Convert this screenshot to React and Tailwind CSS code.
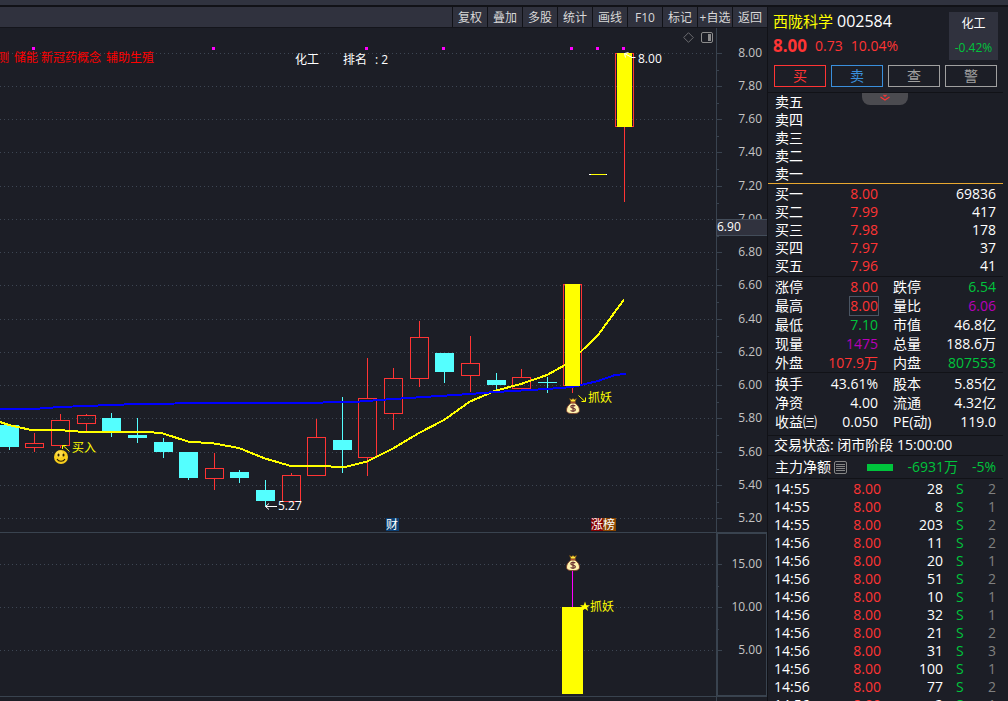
import React from "react";

const TOOLS = ["复权", "叠加", "多股", "统计", "画线", "F10", "标记", "+自选", "返回"];

const GRID = [
  ["8.00", 53], ["7.80", 86], ["7.60", 119], ["7.40", 152], ["7.20", 186], ["7.00", 219],
  ["6.80", 252], ["6.60", 285], ["6.40", 319], ["6.20", 352], ["6.00", 385], ["5.80", 418],
  ["5.60", 452], ["5.40", 485], ["5.20", 518],
];
const LOWER_GRID = [["15.00", 564], ["10.00", 607], ["5.00", 650]];

// [left edge, body top, body bottom, wick top, wick bottom, rising]
const CANDLES = [
  [0, 425, 447, 425, 450, false],
  [25, 443, 448, 433, 452, true],
  [51, 420, 446, 414, 448, true],
  [77, 415, 424, 414, 431, true],
  [102, 418, 432, 413, 437, false],
  [128, 435, 438, 418, 443, false],
  [154, 442, 452, 438, 458, false],
  [179, 452, 478, 452, 480, false],
  [205, 468, 479, 453, 490, true],
  [230, 472, 478, 470, 483, false],
  [256, 490, 501, 480, 506, false],
  [282, 475, 502, 473, 502, true],
  [307, 437, 476, 419, 476, true],
  [333, 440, 450, 397, 473, false],
  [358, 398, 458, 358, 476, true],
  [384, 378, 414, 368, 430, true],
  [410, 337, 379, 321, 387, true],
  [435, 353, 372, 353, 383, false],
  [461, 363, 376, 336, 392, true],
  [487, 380, 385, 373, 389, false],
  [512, 377, 389, 369, 389, true],
  [538, 382, 383, 377, 393, false],
  [563, 284, 386, 284, 393, true],
  [615, 53, 127, 53, 202, true],
];

const SELL = ["卖五", "卖四", "卖三", "卖二", "卖一"];
const BUY = [
  ["买一", "8.00", "69836"], ["买二", "7.99", "417"], ["买三", "7.98", "178"],
  ["买四", "7.97", "37"], ["买五", "7.96", "41"],
];

const R = "text-[#ff3434]";
const G = "text-[#00c43c]";
const P = "text-[#b800b8]";
const W = "text-white";
const STATS = [
  ["涨停", "8.00", R, "跌停", "6.54", G],
  ["最高", "8.00", R, "量比", "6.06", P],
  ["最低", "7.10", G, "市值", "46.8亿", W],
  ["现量", "1475", P, "总量", "188.6万", W],
  ["外盘", "107.9万", R, "内盘", "807553", G],
];
const STATS2 = [
  ["换手", "43.61%", W, "股本", "5.85亿", W],
  ["净资", "4.00", W, "流通", "4.32亿", W],
  ["收益㈢", "0.050", W, "PE(动)", "119.0", W],
];
const TRADES = [
  ["14:55", 28, 2], ["14:55", 8, 1], ["14:55", 203, 2], ["14:56", 11, 2], ["14:56", 20, 1],
  ["14:56", 51, 2], ["14:56", 10, 1], ["14:56", 32, 1], ["14:56", 21, 2], ["14:56", 31, 3],
  ["14:56", 100, 1], ["14:56", 77, 2], ["14:56", 2, 1],
];

function Candle({ c }) {
  const [x, top, bottom, high, low, up] = c;
  const mid = x + 9;
  const color = up ? "#ff3434" : "#54ffff";
  return (
    <g fill={color}>
      {high < top && <rect x={mid} y={high} width="1" height={top - high} />}
      {low > bottom && <rect x={mid} y={bottom} width="1" height={low - bottom} />}
      {up ? (
        <rect x={x + 0.5} y={top + 0.5} width="18" height={bottom - top - 1} fill="none" stroke={color} />
      ) : (
        <rect x={x} y={top} width="19" height={bottom - top} />
      )}
    </g>
  );
}

function MoneyBag({ x, y }) {
  return (
    <g transform={`translate(${x} ${y})`} shapeRendering="auto">
      <path d="M3.5 0.5 L5.5 1.5 L7 0.6 L8.5 1.5 L10.5 0.5 L9 4 H5 Z" fill="#ffe43a" stroke="#6a4010" strokeWidth="0.7" />
      <path d="M5 5 H9 C11.5 7 13.5 9 13.5 12 C13.5 14.8 11.5 15.6 7 15.6 C2.5 15.6 0.5 14.8 0.5 12 C0.5 9 2.5 7 5 5 Z" fill="#fff3ae" stroke="#7a3c28" strokeWidth="0.9" />
      <rect x="4.5" y="3.8" width="5" height="1.4" fill="#a8502c" />
      <path d="M9.2 8.2 C8.5 7.2 4.8 7 4.8 8.8 C4.8 10.6 9.4 9.8 9.4 11.8 C9.4 13.6 5.4 13.4 4.6 12.3 M7 6.6 V14" fill="none" stroke="#6e3434" strokeWidth="1.2" />
    </g>
  );
}

function Chart() {
  return (
    <svg
      className="block h-full w-full"
      viewBox="0 28 767 673"
      preserveAspectRatio="xMaxYMin slice"
      shapeRendering="crispEdges"
      fontSize="12"
      role="img"
      aria-label="西陇科学 K线图"
    >
      <g stroke="#3d4653" strokeDasharray="1 3">
        {[...GRID, ...LOWER_GRID].map(([label, y]) => (
          <line key={label} x1="0" x2="716" y1={y + 0.5} y2={y + 0.5} />
        ))}
      </g>

      <g fill="#39434f">
        <rect x="716" y="28" width="1" height="673" />
        <rect x="0" y="532" width="767" height="1" />
        <rect x="0" y="696" width="767" height="1" />
        {GRID.map(([label, y]) => (
          <React.Fragment key={label}>
            <rect x="717" y={y} width="5" height="1" />
            {y < 518 && <rect x="717" y={y + 17} width="2" height="1" />}
          </React.Fragment>
        ))}
        {LOWER_GRID.map(([label, y]) => (
          <React.Fragment key={label}>
            <rect x="717" y={y} width="5" height="1" />
            {y < 650 && <rect x="717" y={y + 22} width="2" height="1" />}
          </React.Fragment>
        ))}
      </g>
      <rect x="717.5" y="533.5" width="49" height="162" fill="none" stroke="#39434f" />

      <g fill="#c4c4c4" textAnchor="end">
        {[...GRID, ...LOWER_GRID].map(([label, y]) => (
          <text key={label} x="762" y={y + 4}>{label}</text>
        ))}
      </g>
      <rect x="716.5" y="219.5" width="51" height="16" fill="#30323e" stroke="#434d5a" />
      <text x="717" y="231" fill="#fff">6.90</text>

      {CANDLES.map((c) => <Candle key={c[0]} c={c} />)}
      <rect x="589" y="174" width="2" height="1" fill="#fff" />
      <rect x="591" y="174" width="15" height="1" fill="#ff0" />
      <rect x="606" y="174" width="1" height="1" fill="#fff" />

      <polyline
        fill="none" stroke="#ff0" strokeWidth="2"
        points="0,422 9,425 31,430 60,430 70,431 86,432 150,432 163,433.5 188,441.5 214,443.5 239,448 265,458.5 291,466 316,466 345,467 367,461.5 393,448.5 419,433 444,420 470,401.5 496,390.5 521,384 547,375 565,365 580,352.5 598,335 624,299.5"
      />
      <polyline
        fill="none" stroke="#00f" strokeWidth="2"
        points="0,409 34,409 60,407 111,405 137,404 214,403 316,403 330,402 353,402 393,399 470,394 496,392 547,389 572,387 598,381 615,375 626,374"
      />
      <g fill="#ff0">
        <rect x="565" y="284" width="15" height="102" />
        <rect x="617" y="53" width="15" height="74" />
        <rect x="562" y="607" width="21" height="87" />
      </g>
      <rect x="572" y="570" width="1" height="37" fill="#f0f" />

      <g fill="#f0f">
        {[32, 212, 365, 442, 570, 596, 622].map((x) => (
          <rect key={x} x={x} y="47" width="3" height="3" />
        ))}
      </g>

      <g fill="#f00">
        <text x="-3" y="62">测</text>
        <text x="14" y="62">储能</text>
        <text x="41" y="62">新冠药概念</text>
        <text x="106" y="62">辅助生殖</text>
      </g>
      <g fill="#fff">
        <text x="295" y="64">化工</text>
        <text x="343" y="64">排名</text>
        <text x="375" y="64">: 2</text>
        <text x="638" y="63">8.00</text>
        <text x="278" y="510">5.27</text>
      </g>
      <g fill="none" stroke="#fff" shapeRendering="auto">
        <path d="M635.5 57.5 H632 L624.5 53.5 M625.5 57.5 L624.5 53.5 L628.5 52.5" />
        <path d="M277 506.5 H265.5 M269 503.5 L265.5 506.5 L269 509.5" />
      </g>
      <g fill="none" stroke="#ff0" shapeRendering="auto">
        <path d="M69.5 451.5 L63 445.5 M62.5 449 V445.5 H66.5" />
        <path d="M578.5 395.5 L585 401.5 M585.5 397.5 V401.5 H581.5" />
      </g>
      <g fill="#ff0">
        <text x="72" y="452">买入</text>
        <text x="588" y="402">抓妖</text>
        <text x="590" y="611">抓妖</text>
      </g>
      <path d="M585 601.5 L586.3 605.2 H590 L587.1 607.4 L588.2 611 L585 608.8 L581.8 611 L582.9 607.4 L580 605.2 H583.7 Z" fill="#ff0" shapeRendering="auto" />

      <g shapeRendering="auto">
        <circle cx="61" cy="457" r="7" fill="#f9cf1c" />
        <circle cx="59.5" cy="454" r="3.5" fill="#ffe35c" opacity="0.7" />
        <ellipse cx="58.5" cy="455" rx="1" ry="1.5" fill="#2a1c00" />
        <ellipse cx="63.5" cy="455" rx="1" ry="1.5" fill="#2a1c00" />
        <path d="M57 459 C58.5 462 63.5 462 65 459" fill="none" stroke="#2a1c00" strokeWidth="1.1" />
      </g>
      <MoneyBag x={566} y={398} />
      <MoneyBag x={566} y={555} />

      <rect x="386" y="518" width="13" height="13" fill="#0a3f74" />
      <rect x="591" y="518" width="12" height="13" fill="#850000" />
      <rect x="603" y="518" width="13" height="13" fill="#8a4600" />
      <g fill="#fff">
        <text x="386" y="529">财</text>
        <text x="591" y="529">涨</text>
        <text x="603" y="529">榜</text>
      </g>
    </svg>
  );
}

function StatTable({ rows, label }) {
  return (
    <table aria-label={label} className="w-full table-fixed border-collapse">
      <tbody>
        {rows.map(([a, av, ac, b, bv, bc]) => (
          <tr key={a} className="h-[19px]">
            <th className="w-[50px] whitespace-nowrap p-0 pl-[7px] text-left font-normal">{a}</th>
            <td className={`w-[60px] p-0 text-right ${ac}`}>
              {a === "最高" ? <span className="inline-block outline outline-[#4a5563]">{av}</span> : av}
            </td>
            <th className="w-[60px] whitespace-nowrap p-0 pl-[15px] text-left font-normal">{b}</th>
            <td className={`p-0 pr-[7px] text-right whitespace-nowrap ${bc}`}>{bv}</td>
          </tr>
        ))}
      </tbody>
    </table>
  );
}

function QuotePanel() {
  const action = "h-[22px] flex-1 border text-sm leading-none";
  return (
    <aside className="mr-[5px] w-[235px] shrink-0 overflow-hidden text-sm leading-[18px] text-white">
      <header className="flex h-[86px] flex-col border-b border-[#111217] pt-[5px] pr-[5px] pl-[5px]">
        <div className="flex h-12 justify-between">
          <div className="flex flex-col gap-1">
            <h1 className="flex h-[18px] items-center gap-1">
              <span className="text-[15px] text-[#ff0]">西陇科学</span>
              <span className="text-base leading-[18px]">002584</span>
            </h1>
            <p className="flex h-6 items-center gap-2 text-[#ff3434]">
              <strong className="text-[17px]">8.00</strong>
              <span>0.73</span>
              <span>10.04%</span>
            </p>
          </div>
          <a href="#sector" className="flex w-[49px] flex-col items-center gap-[6px] bg-[#30323e] pt-[3px] text-xs leading-[18px]">
            <span>化工</span>
            <span className="text-[#00c43c]">-0.42%</span>
          </a>
        </div>
        <div className="mt-[5px] flex gap-[5px] pr-px pl-px">
          <button className={`${action} border-[#ff3434] text-[#ff3434]`}>买</button>
          <button className={`${action} border-[#3a8fdc] text-[#3a8fdc]`}>卖</button>
          <button className={`${action} border-[#a0a0a0] text-[#a0a0a0]`}>查</button>
          <button className={`${action} border-[#a0a0a0] text-[#a0a0a0]`}>警</button>
        </div>
      </header>

      <div className="relative border-b border-[#e8a830]">
        <ul>
          {SELL.map((s) => <li key={s} className="h-[18px] pl-[7px]">{s}</li>)}
        </ul>
        <button aria-label="展开" className="absolute top-0 left-[94px] flex h-3 w-[46px] justify-center rounded-b-lg bg-[#4b4b50]">
          <svg width="10" height="8" viewBox="0 0 10 8" fill="none" stroke="#ff3434" strokeWidth="1.1">
            <path d="M3.5 2 L5 3.2 L6.5 2 M0.5 4 L5 7 L9.5 4" />
          </svg>
        </button>
      </div>

      <table aria-label="买盘" className="mt-px w-full table-fixed border-collapse">
        <tbody>
          {BUY.map(([n, p, v]) => (
            <tr key={n} className="h-[18px]">
              <th className="w-[50px] p-0 pl-[7px] text-left font-normal">{n}</th>
              <td className="w-[60px] p-0 text-right text-[#ff3434]">{p}</td>
              <td className="p-0 pr-[7px] text-right">{v}</td>
            </tr>
          ))}
        </tbody>
      </table>

      <section className="mt-px border-t border-[#111217]"><StatTable label="行情" rows={STATS} /></section>
      <section className="border-t border-[#111217] pt-px pb-1"><StatTable label="基本面" rows={STATS2} /></section>
      <p className="h-5 border-t border-[#111217] pl-[6px] leading-[18px]">交易状态: 闭市阶段 15:00:00</p>
      <div className="flex h-6 items-center border-y border-[#111217] pr-[7px] pl-[7px]">
        <span>主力净额</span>
        <svg className="ml-[3px]" width="13" height="13" viewBox="0 0 13 13" fill="none" stroke="#858585">
          <rect x="0.5" y="0.5" width="12" height="12" rx="1.5" />
          <path d="M2 3.5 H11 M2 5.5 H11 M2 7.5 H11 M2 9.5 H11" />
        </svg>
        <span className="ml-5 h-[7px] w-[26px] bg-[#00c43c]" />
        <span className="flex-1 text-right text-[#00c43c]">-6931万</span>
        <span className="w-[38px] text-right text-[#00c43c]">-5%</span>
      </div>

      <table aria-label="成交明细" className="mt-px w-full table-fixed border-collapse">
        <tbody>
          {TRADES.map(([t, v, n], i) => (
            <tr key={i} className="h-[18px]">
              <td className="w-[50px] p-0 pl-[6px]">{t}</td>
              <td className="w-[63px] p-0 text-right text-[#ff3434]">8.00</td>
              <td className="w-[62px] p-0 text-right">{v}</td>
              <td className="w-[24px] p-0 pl-[13px] text-left text-[#00c43c]">S</td>
              <td className="p-0 pr-[7px] text-right text-[#808080]">{n}</td>
            </tr>
          ))}
        </tbody>
      </table>
    </aside>
  );
}

export default function App() {
  return (
    <div className="flex h-screen flex-col overflow-hidden bg-[#1c1e26] font-['Open_Sans','Noto_Sans_CJK_SC',sans-serif]">
      <div className="h-[7px] shrink-0 border-b-2 border-[#111217] bg-[#30333f]" />
      <div className="flex min-h-0 flex-1">
        <main className="flex min-w-0 flex-1 flex-col">
          <nav className="flex h-5 shrink-0 justify-end bg-[#30323e]">
            {TOOLS.map((t) => (
              <button key={t} className="w-[35px] whitespace-nowrap border-l border-[#111217] pt-[2px] text-center text-xs text-[#d8d8d8]">{t}</button>
            ))}
          </nav>
          <div className="relative min-h-0 flex-1 border-t border-[#14151b]">
            <Chart />
            <div className="absolute top-1 right-[54px] flex items-center gap-[7px]">
              <button aria-label="标记">
                <svg className="block" width="11" height="11" viewBox="0 0 11 11" fill="none" stroke="#6c6c70">
                  <path d="M5.5 0.7 L10.3 5.5 L5.5 10.3 L0.7 5.5 Z" />
                </svg>
              </button>
              <button aria-label="侧栏">
                <svg className="block" width="12" height="11" viewBox="0 0 12 11" fill="none" stroke="#8c8c8c">
                  <rect x="0.5" y="0.5" width="11" height="10" rx="1.5" />
                  <rect x="7" y="2" width="3" height="7" fill="#8c8c8c" stroke="none" />
                </svg>
              </button>
            </div>
          </div>
        </main>
        <div className="w-px shrink-0 bg-[#111217]" />
        <QuotePanel />
      </div>
    </div>
  );
}
